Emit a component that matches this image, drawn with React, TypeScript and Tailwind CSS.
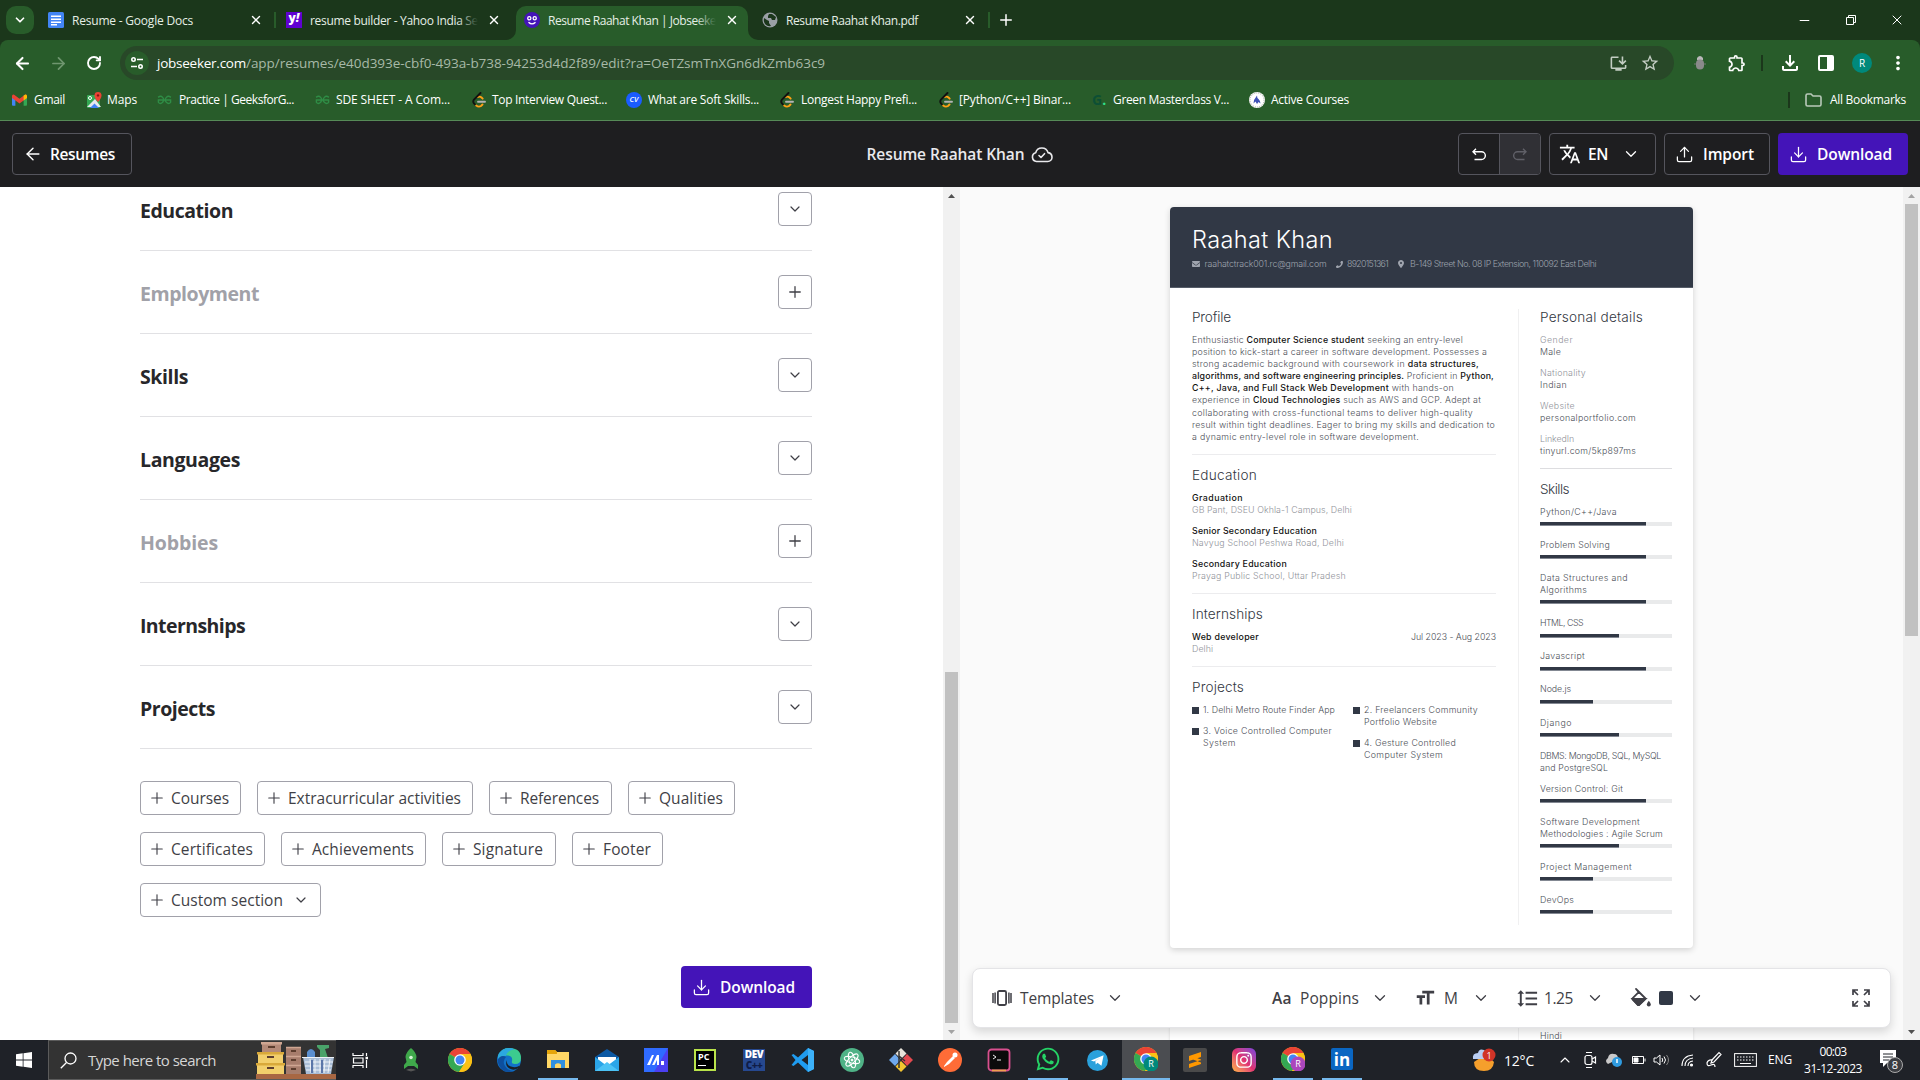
import { useLayoutEffect, useRef, type ReactNode } from "react";
import { ArrowLeft, ArrowRight, ChevronDown, ChevronUp, Download, Minus, Plus, RotateCw, Upload, X } from "lucide-react";
import { FaEnvelope, FaInstagram, FaPhone, FaWhatsapp } from "react-icons/fa";
import { FaLocationDot } from "react-icons/fa6";
import {
  MdFormatLineSpacing,
  MdFormatSize,
  MdMoreVert,
  MdOutlineExtension,
  MdOutlineFileDownload,
  MdOutlineInstallDesktop,
  MdStarBorder,
  MdTranslate,
} from "react-icons/md";

/** One line of text whose tracking is adjusted so it spans `w` pixels. */
function Fit({ w, className = "", children }: { w: number; className?: string; children: ReactNode }) {
  const ref = useRef<HTMLSpanElement>(null);
  useLayoutEffect(() => {
    const el = ref.current;
    if (!el) return;
    el.style.letterSpacing = "0px";
    const count = el.textContent?.length || 1;
    el.style.letterSpacing = `${(w - el.getBoundingClientRect().width) / count}px`;
  }, [w]);
  return (
    <span ref={ref} className={`inline-block shrink-0 whitespace-pre ${className}`}>
      {children}
    </span>
  );
}

/* ---------- Browser chrome ---------- */

const DocsIcon = () => (
  <svg viewBox="0 0 16 16" className="size-4">
    <rect width="16" height="16" rx="1.5" fill="#4285f4" />
    <path d="M3 4.2h10M3 7.2h10M3 10.2h10M3 12.8h6" stroke="#fff" strokeWidth="1.5" />
  </svg>
);

const YahooIcon = () => (
  <div className="flex size-4 items-center justify-center bg-[#5f01d1] text-[12px] leading-none font-extrabold text-white">
    <span className="-mt-1">
      y<span className="italic">!</span>
    </span>
  </div>
);

const JobIcon = () => (
  <svg viewBox="0 0 16 16" className="size-4">
    <circle cx="8" cy="8" r="8" fill="#4414b8" />
    <g fill="none" stroke="#fff">
      <circle cx="5.3" cy="6.3" r="1.6" strokeWidth="1.3" />
      <circle cx="10.7" cy="6.3" r="1.6" strokeWidth="1.3" />
      <path d="M4.5 10.2q3.5 3.4 7 0" strokeWidth="1.3" />
    </g>
  </svg>
);

const GlobeIcon = () => (
  <svg viewBox="0 0 16 16" className="size-4">
    <circle cx="8" cy="8" r="7.5" fill="#9aa0a6" />
    <path d="M2 6l3 2 2 1v2l2 3q-6 1-7.2-5zM7 2l3 0 4 3-1 3-3 0-1-2-3 0 0-2z" fill="#1b371b" />
  </svg>
);

function Tab({ icon, label, w, className, fade }: { icon: ReactNode; label: string; w: number; className: string; fade?: string }) {
  return (
    <div className={`flex h-[34px] items-center ${className}`}>
      {icon}
      <div className="relative mt-px ml-2 h-[18px] w-[168px] overflow-hidden text-[12px] leading-[18px] text-[#e6efe6]">
        <Fit w={w}>{label}</Fit>
        {fade && <div className={`absolute inset-y-0 right-0 w-5 bg-linear-to-r from-transparent ${fade}`} />}
      </div>
      <X className="ml-[9px] size-3.5 text-white" strokeWidth={2.4} />
    </div>
  );
}

const TabStrip = () => (
  <div className="flex h-10 items-end bg-[#1b371b] pl-1.5 text-white">
    <div className="mb-1.5 flex size-7 items-center justify-center rounded-[10px] bg-[#285c2a]">
      <ChevronDown className="size-3.5" strokeWidth={3} />
    </div>
    <Tab icon={<DocsIcon />} label="Resume - Google Docs" w={121} className="mb-[3px] ml-3.5 w-[226px]" />
    <div className="mb-3 h-4 w-0.5 bg-[#285c2a]" />
    <Tab icon={<YahooIcon />} label="resume builder - Yahoo India Se" w={168} className="mb-[3px] ml-2.5 w-[220px]" fade="to-[#1b371b]" />
    <div className="flex h-[34px] w-[252px]">
      <div className="w-2.5 self-end bg-[#285c2a]">
        <div className="h-2.5 rounded-br-[10px] bg-[#1b371b]" />
      </div>
      <div className="h-[34px] w-[232px] rounded-t-[10px] bg-[#285c2a] pr-2 pl-2">
        <Tab icon={<JobIcon />} label="Resume Raahat Khan | Jobseeke" w={168} className="-mt-[3px]" fade="to-[#285c2a]" />
      </div>
      <div className="w-2.5 self-end bg-[#285c2a]">
        <div className="h-2.5 rounded-bl-[10px] bg-[#1b371b]" />
      </div>
    </div>
    <Tab icon={<GlobeIcon />} label="Resume Raahat Khan.pdf" w={132} className="mb-[3px] ml-1 w-[226px]" />
    <div className="mb-3 h-4 w-0.5 bg-[#285c2a]" />
    <Plus className="mb-[11px] ml-[7px] size-[18px]" strokeWidth={2} />
    <div className="mb-3 ml-auto flex items-center pr-[15px]">
      <Minus className="size-[15px]" strokeWidth={1.6} />
      <svg viewBox="0 0 12 12" className="ml-[33px] size-3" fill="none" stroke="#fff">
        <path d="M1.5 3.5h7v7h-7zM3.5 3.5v-2h7v7h-2" />
      </svg>
      <X className="ml-[32px] size-4" strokeWidth={1.5} />
    </div>
  </div>
);

const Toolbar = () => (
  <div className="flex h-[46px] items-center rounded-t-lg bg-[#285c2a] pl-[13px] text-white">
    <ArrowLeft className="size-[19px]" strokeWidth={2.6} />
    <ArrowRight className="ml-[17px] size-[19px] text-[#6f966f]" strokeWidth={2.2} />
    <RotateCw className="ml-[18px] size-4" strokeWidth={2.8} />
    <div className="ml-[18px] flex h-[34px] w-[1554px] items-center rounded-full bg-[#284828] pl-[5px]">
      <div className="flex size-6 items-center justify-center rounded-full bg-[#285c2a]">
        <svg viewBox="0 0 14 14" className="size-3.5" fill="none" stroke="#fff" strokeWidth="1.6">
          <circle cx="3.5" cy="3.5" r="1.7" />
          <path d="M7 3.5h6M1 10.5h6" />
          <circle cx="10.5" cy="10.5" r="1.7" />
        </svg>
      </div>
      <Fit w={89} className="mt-px ml-2 text-[13.5px]">jobseeker.com</Fit>
      <Fit w={579} className="mt-px text-[13.5px] text-[#a7b9a7]">
        /app/resumes/e40d393e-cbf0-493a-b738-94253d4d2f89/edit?ra=OeTZsmTnXGn6dkZmb63c9
      </Fit>
      <MdOutlineInstallDesktop className="ml-auto size-[19px] text-[#c3cdc3]" />
      <MdStarBorder className="mr-[14px] ml-[12px] size-[20px] text-[#c3cdc3]" />
    </div>
    <svg viewBox="0 0 12 16" className="ml-5 h-4 w-3">
      <path d="M3 3q3-4 6 0v2H3z" fill="#b9b9b9" />
      <rect x="2" y="4.5" width="8" height="10" rx="4" fill="#8a8a8a" />
      <path d="M0 9h2M10 9h2" stroke="#777" />
    </svg>
    <MdOutlineExtension className="ml-[21px] size-5" />
    <div className="ml-[14px] h-4 w-0.5 bg-[#1b371b]" />
    <MdOutlineFileDownload className="ml-[15px] size-6" />
    <svg viewBox="0 0 16 16" className="ml-4 size-4">
      <rect x="1" y="1" width="14" height="14" rx="1" fill="none" stroke="#fff" strokeWidth="2" />
      <rect x="9" y="1" width="6" height="14" fill="#fff" />
    </svg>
    <div className="ml-[18px] flex size-5 items-center justify-center rounded-full bg-[#00897b] text-[10px]">R</div>
    <MdMoreVert className="ml-[15px] size-[22px]" />
  </div>
);

const GmailIcon = () => (
  <svg viewBox="0 0 16 12" className="h-3 w-[15px]">
    <path d="M0 1.5V11q0 1 1 1h2.6V5z" fill="#4285f4" />
    <path d="M16 1.5V11q0 1-1 1h-2.6V5z" fill="#34a853" />
    <path d="M0 1.5Q1-.6 3 .8L8 4.6l5-3.8q2-1.4 3 .7v2.3L8 9.6 0 3.8z" fill="#ea4335" />
    <path d="M12.4 1.2 13 .8q2-1.4 3 .7v2.3l-3.6 2.7z" fill="#fbbc04" />
  </svg>
);

const MapsIcon = () => (
  <svg viewBox="0 0 16 16" className="size-4">
    <rect x="1" y="3" width="13" height="13" rx="1" fill="#34a853" />
    <path d="M1 15 9 7l6 8z" fill="#e8eaed" />
    <path d="M4 16l4.500-4.500L13 16z" fill="#4285f4" />
    <path d="M12 0q3.500 0 3.500 3.400Q15.500 6 12 10 8.500 6 8.500 3.400 8.500 0 12 0z" fill="#ea4335" />
    <circle cx="12" cy="3.400" r="1.200" fill="#811" />
    <circle cx="4" cy="6" r="1.500" fill="none" stroke="#fff" />
  </svg>
);

const GfgIcon = () => (
  <svg viewBox="0 0 16 10" className="h-2.5 w-[15px]" fill="none" stroke="#2f8d46" strokeWidth="1.500">
    <path d="M1.200 2.200Q4 0 6 2.200T6 7.500Q3.500 10 1.500 7.500V5h13v2.500q-2 2.500-4.500 0t0-5.300q2-2.200 4.800 0" />
  </svg>
);

const LeetIcon = () => (
  <svg viewBox="0 0 14 16" className="h-4 w-3.5" fill="none" strokeLinecap="round" strokeWidth="1.900">
    <path d="M5.500 5q2.500-1 4 .500l1.200 1.200" stroke="#ffa116" />
    <path d="M8.500 1 2 7.500Q.5 9.500 2 11.500l1.200 1.200" stroke="#111" />
    <path d="M4.200 13.500q2.500 2 4.800.500l1.500-1.500" stroke="#ffa116" />
    <path d="M6 9.700h7" stroke="#b3b3b3" />
  </svg>
);

const CvIcon = () => (
  <div className="flex size-4 items-center justify-center rounded-full bg-[#1a5cff] text-[7.500px] font-semibold text-white italic">CV</div>
);

const GreenIcon = () => (
  <div className="flex h-4 w-[15px] items-center text-[14px] leading-none font-bold text-[#0c4f35]">
    G<span className="text-[#2fe08a]">.</span>
  </div>
);

const ActiveIcon = () => (
  <svg viewBox="0 0 16 16" className="size-4">
    <circle cx="8" cy="8" r="8" fill="#fff" />
    <circle cx="8" cy="8" r="7" fill="none" stroke="#aaa" strokeDasharray="1 1" />
    <path d="M4.500 11.500q0-4 3.500-8Q8 6.500 9.500 7q2 2 2 4.500l-2-1.500L8 12 6.500 9.500z" fill="#3f51b5" />
  </svg>
);

const bookmarks: { icon: ReactNode; label: string; w: number; cell: string; gap: string }[] = [
  { icon: <GmailIcon />, label: "Gmail", w: 31, cell: "w-[74px]", gap: "ml-[7px]" },
  { icon: <MapsIcon />, label: "Maps", w: 30, cell: "w-[71px]", gap: "ml-[5px]" },
  { icon: <GfgIcon />, label: "Practice | GeeksforG...", w: 115, cell: "w-[158px]", gap: "ml-[7px]" },
  { icon: <GfgIcon />, label: "SDE SHEET - A Com...", w: 114, cell: "w-[157px]", gap: "ml-[6px]" },
  { icon: <LeetIcon />, label: "Top Interview Quest...", w: 115, cell: "w-[154px]", gap: "ml-[6px]" },
  { icon: <CvIcon />, label: "What are Soft Skills...", w: 111, cell: "w-[154px]", gap: "ml-[6px]" },
  { icon: <LeetIcon />, label: "Longest Happy Prefi...", w: 116, cell: "w-[159px]", gap: "ml-[7px]" },
  { icon: <LeetIcon />, label: "[Python/C++] Binar...", w: 112, cell: "w-[153px]", gap: "ml-[6px]" },
  { icon: <GreenIcon />, label: "Green Masterclass V...", w: 116, cell: "w-[157px]", gap: "ml-[6px]" },
  { icon: <ActiveIcon />, label: "Active Courses", w: 78, cell: "w-[110px]", gap: "ml-[6px]" },
];

const BookmarkBar = () => (
  <div className="flex h-[35px] items-center border-b border-[#568a57] bg-[#285c2a] pb-1.5 pl-3 text-[12px] text-white">
    {bookmarks.map((b) => (
      <div key={b.label} className={`flex shrink-0 items-center ${b.cell}`}>
        {b.icon}
        <Fit w={b.w} className={b.gap}>{b.label}</Fit>
      </div>
    ))}
    <div className="ml-auto h-4 w-0.5 bg-[#1b371b]" />
    <svg viewBox="0 0 17 14" className="ml-[15px] h-3.5 w-[17px]" fill="none" stroke="#b9c9b9" strokeWidth="1.600">
      <path d="M1 2.500Q1 1 2.500 1H6l2 2h6.500Q16 3 16 4.500v7q0 1.500-1.500 1.500h-12Q1 13 1 11.500z" />
    </svg>
    <Fit w={76} className="mr-[14px] ml-2">All Bookmarks</Fit>
  </div>
);

/* ---------- Application header ---------- */

const outlined = "flex h-[42px] items-center rounded-[4px] border border-[#55555d]";

const AppHeader = () => (
  <div className="grid h-[66px] grid-cols-3 items-center bg-[#1e1e20] px-3 text-[15.500px] font-semibold text-white">
    <div className={`${outlined} w-[120px] pl-[10px]`}>
      <ArrowLeft className="size-[20px]" strokeWidth={1.700} />
      <Fit w={65} className="ml-[7px] pt-0.5">Resumes</Fit>
    </div>
    <div className="flex items-center justify-center">
      <Fit w={158} className="pt-0.5 text-[15.500px] text-[#e9e9ec]">Resume Raahat Khan</Fit>
      <svg viewBox="0 0 22 18" className="mr-px ml-[6px] h-[18px] w-[22px]" fill="none" stroke="#e9e9ec" strokeWidth="1.600" strokeLinecap="round" strokeLinejoin="round">
        <path d="M5.500 16.500a4.500 4.500 0 0 1-.8-8.800A6.400 6.400 0 0 1 17 7.600q4 .6 4 4.700a4.200 4.200 0 0 1-4.200 4.200z" />
        <path d="M8 10.500l2 2 3.500-3.800" />
      </svg>
    </div>
    <div className="flex justify-end gap-2">
      <div className={`${outlined} w-[83px] overflow-hidden`}>
        <div className="flex h-full w-[41px] items-center justify-center border-r border-[#55555d]">
          <svg viewBox="0 0 14 13" className="h-[13px] w-3.5" fill="none" stroke="#fff" strokeWidth="1.400">
            <path d="M4 .8 1 3.800l3 3M1 3.800h8.500a3.700 3.700 0 0 1 0 7.700H2.500" />
          </svg>
        </div>
        <div className="flex h-full flex-1 items-center justify-center bg-[#303035]">
          <svg viewBox="0 0 14 13" className="h-[13px] w-3.5" fill="none" stroke="#606068" strokeWidth="1.400">
            <path d="m10 .8 3 3-3 3M13 3.800H4.500a3.700 3.700 0 0 0 0 7.700h7" />
          </svg>
        </div>
      </div>
      <div className={`${outlined} w-[107px] pl-[9px]`}>
        <MdTranslate className="size-[22px]" />
        <Fit w={20} className="ml-[7px] pt-0.5">EN</Fit>
        <ChevronDown className="ml-[14px] size-[18px]" strokeWidth={1.700} />
      </div>
      <div className={`${outlined} w-[106px] pl-[10px]`}>
        <Upload className="size-[19px]" strokeWidth={1.600} />
        <Fit w={51} className="ml-[9px] pt-0.5">Import</Fit>
      </div>
      <div className="flex h-[42px] w-[130px] items-center rounded-[4px] bg-[#4414b8] pl-[11px]">
        <Download className="size-[19px]" strokeWidth={1.600} />
        <Fit w={75} className="ml-[9px] pt-0.5">Download</Fit>
      </div>
    </div>
  </div>
);

/* ---------- Editor column ---------- */

const sections = [
  { name: "Education", w: 93, empty: false },
  { name: "Employment", w: 119, empty: true },
  { name: "Skills", w: 48, empty: false },
  { name: "Languages", w: 100, empty: false },
  { name: "Hobbies", w: 78, empty: true },
  { name: "Internships", w: 105, empty: false },
  { name: "Projects", w: 75, empty: false },
];

const chipRows = [
  [
    { name: "Courses", w: 58, box: "w-[101px]" },
    { name: "Extracurricular activities", w: 173, box: "w-[216px]" },
    { name: "References", w: 79, box: "w-[123px]" },
    { name: "Qualities", w: 64, box: "w-[107px]" },
  ],
  [
    { name: "Certificates", w: 82, box: "w-[125px]" },
    { name: "Achievements", w: 102, box: "w-[145px]" },
    { name: "Signature", w: 70, box: "w-[114px]" },
    { name: "Footer", w: 48, box: "w-[91px]" },
  ],
  [{ name: "Custom section", w: 112, box: "w-[181px]" }],
];

const Editor = () => (
  <div className="w-[943px] overflow-hidden bg-white pt-[5px] pl-[140px]">
    <div className="w-[672px]">
      {sections.map((s) => (
        <div key={s.name} className="mb-6 flex h-[59px] items-start justify-between border-b border-[#e1e1e4]">
          <Fit w={s.w} className={s.empty ? "pt-[5px] text-[19.500px] leading-7 font-bold text-[#a1a1a8]" : "pt-[5px] text-[19.500px] leading-7 font-bold text-[#27272a]"}>
            {s.name}
          </Fit>
          <div className="flex size-[34px] items-center justify-center rounded-[4px] border border-[#a1a1aa] text-[#3f3f46]">
            {s.empty ? <Plus className="size-[18px]" strokeWidth={1.700} /> : <ChevronDown className="size-4" strokeWidth={1.800} />}
          </div>
        </div>
      ))}
      <div className="mt-8 flex flex-col gap-[17px]">
        {chipRows.map((row, i) => (
          <div key={i} className="flex gap-4">
            {row.map((c) => (
              <div key={c.name} className={`flex h-[34px] items-center rounded-[4px] border border-[#a1a1aa] pl-[7px] text-[15.500px] text-[#3f3f46] ${c.box}`}>
                <Plus className="size-[18px]" strokeWidth={1.500} />
                <Fit w={c.w} className="ml-[5px] pt-0.5 font-medium">{c.name}</Fit>
                {c.name === "Custom section" && <ChevronDown className="ml-[10px] size-4" strokeWidth={1.800} />}
              </div>
            ))}
          </div>
        ))}
      </div>
      <div className="mt-[49px] ml-auto flex h-[42px] w-[131px] items-center rounded-[4px] bg-[#4414b8] pl-[11px] text-[15.500px] font-semibold text-white">
        <Download className="size-[19px]" strokeWidth={1.600} />
        <Fit w={75} className="ml-[9px] pt-0.5">Download</Fit>
      </div>
    </div>
  </div>
);

const Arrow = ({ up, dark }: { up?: boolean; dark?: boolean }) => (
  <svg viewBox="0 0 17 17" className="size-[17px] shrink-0" fill={dark ? "#505050" : "#a3a3a3"}>
    <path d={up ? "M5 11h7L8.500 7z" : "M5 7h7l-3.500 4z"} />
  </svg>
);

/* ---------- Resume preview ---------- */

const Heading = ({ w, children }: { w: number; children: ReactNode }) => (
  <h2 className="h-[25px] text-[13.600px] leading-[17px] font-light text-[#33373f]">
    <Fit w={w}>{children}</Fit>
  </h2>
);

const B = ({ children }: { children: ReactNode }) => <b className="font-medium text-[#111]">{children}</b>;

const profile: { w: number; text: ReactNode }[] = [
  { w: 271, text: <>Enthusiastic <B>Computer Science student</B> seeking an entry-level</> },
  { w: 295, text: "position to kick-start a career in software development. Possesses a" },
  { w: 287, text: <>strong academic background with coursework in <B>data structures,</B></> },
  { w: 302, text: <><B>algorithms, and software engineering principles.</B> Proficient in <B>Python,</B></> },
  { w: 262, text: <><B>C++, Java, and Full Stack Web Development</B> with hands-on</> },
  { w: 289, text: <>experience in <B>Cloud Technologies</B> such as AWS and GCP. Adept at</> },
  { w: 281, text: "collaborating with cross-functional teams to deliver high-quality" },
  { w: 303, text: "result within tight deadlines. Eager to bring my skills and dedication to" },
  { w: 227, text: "a dynamic entry-level role in software development." },
];

const education = [
  { t: "Graduation", tw: 51, s: "GB Pant, DSEU Okhla-1 Campus, Delhi", sw: 160 },
  { t: "Senior Secondary Education", tw: 125, s: "Navyug School Peshwa Road, Delhi", sw: 152 },
  { t: "Secondary Education", tw: 95, s: "Prayag Public School, Uttar Pradesh", sw: 154 },
];

const details = [
  { t: "Gender", tw: 33, s: "Male", sw: 21 },
  { t: "Nationality", tw: 46, s: "Indian", sw: 27 },
  { t: "Website", tw: 35, s: "personalportfolio.com", sw: 96 },
  { t: "LinkedIn", tw: 34, s: "tinyurl.com/5kp897ms", sw: 96 },
];

const projects = [
  [
    [["1. Delhi Metro Route Finder App", 132]],
    [["3. Voice Controlled Computer", 129], ["System", 33]],
  ],
  [
    [["2. Freelancers Community", 114], ["Portfolio Website", 73]],
    [["4. Gesture Controlled", 92], ["Computer System", 79]],
  ],
] as [string, number][][][];

const skills: { lines: [string, number][]; bar: string }[] = [
  { lines: [["Python/C++/Java", 77]], bar: "w-4/5" },
  { lines: [["Problem Solving", 70]], bar: "w-4/5" },
  { lines: [["Data Structures and", 88], ["Algorithms", 47]], bar: "w-4/5" },
  { lines: [["HTML, CSS", 43]], bar: "w-3/5" },
  { lines: [["Javascript", 45]], bar: "w-4/5" },
  { lines: [["Node.js", 31]], bar: "w-2/5" },
  { lines: [["Django", 32]], bar: "w-3/5" },
  { lines: [["DBMS: MongoDB, SQL, MySQL", 121], ["and PostgreSQL", 68]], bar: "" },
  { lines: [["Version Control: Git", 83]], bar: "w-4/5" },
  { lines: [["Software Development", 100], ["Methodologies : Agile Scrum", 123]], bar: "w-3/5" },
  { lines: [["Project Management", 92]], bar: "w-2/5" },
  { lines: [["DevOps", 34]], bar: "w-2/5" },
];

const Line = ({ w, className = "", children }: { w: number; className?: string; children: ReactNode }) => (
  <div className={`h-[12.100px] leading-[12.100px] ${className}`}>
    <Fit w={w}>{children}</Fit>
  </div>
);

const Resume = () => (
  <div className="h-[741px] w-[523px] shrink-0 overflow-hidden rounded-[4px] bg-white font-[Inter,sans-serif] text-[8.800px] font-light text-[#4a4e56] shadow-[0_2px_6px_rgba(0,0,0,0.16)]">
    <div className="h-[81px] border-b border-[#565d69] bg-[#313845] px-[22px] pt-[18px]">
      <h1 className="text-[23.500px] leading-[30px] text-white">
        <Fit w={141}>Raahat Khan</Fit>
      </h1>
      <div className="mt-[3px] flex items-center leading-3 text-[#9fa4ae]">
        <FaEnvelope className="size-2" />
        <Fit w={122} className="ml-[4.500px]">raahatctrack001.rc@gmail.com</Fit>
        <FaPhone className="ml-[9px] size-[7px]" />
        <Fit w={41} className="ml-[4.500px]">8920151361</Fit>
        <FaLocationDot className="ml-[9px] size-2" />
        <Fit w={186} className="ml-[5px]">B-149 Street No. 08 IP Extension, 110092 East Delhi</Fit>
      </div>
    </div>
    <div className="flex pt-[21px] pl-[22px]">
      <div className="h-[616px] w-[327px] border-r border-[#f0f0f1] pr-[22px]">
        <Heading w={39}>Profile</Heading>
        <div className="h-[121px] border-b border-[#ececee]">
          {profile.map((l, i) => (
            <Line key={i} w={l.w}>{l.text}</Line>
          ))}
        </div>
        <div className="h-[139px] border-b border-[#ececee] pt-[12px]">
          <Heading w={65}>Education</Heading>
          {education.map((e) => (
            <div key={e.t} className="mb-[8.800px]">
              <Line w={e.tw}><B>{e.t}</B></Line>
              <Line w={e.sw} className="text-[#8f9299]">{e.s}</Line>
            </div>
          ))}
        </div>
        <div className="h-[73px] border-b border-[#ececee] pt-[12px]">
          <Heading w={71}>Internships</Heading>
          <div className="flex justify-between">
            <Line w={67}><B>Web developer</B></Line>
            <Line w={85}>Jul 2023 - Aug 2023</Line>
          </div>
          <Line w={21} className="text-[#8f9299]">Delhi</Line>
        </div>
        <div className="pt-[12px]">
          <Heading w={52}>Projects</Heading>
          <div className="grid grid-cols-[161px_1fr]">
            {projects.map((col, i) => (
              <div key={i}>
                {col.map((item, j) => (
                  <div key={j} className="mb-[8.800px] flex">
                    <div className="mt-[3px] mr-1 size-[7px] bg-[#313845]" />
                    <div>
                      {item.map(([t, w]) => (
                        <Line key={t} w={w}>{t}</Line>
                      ))}
                    </div>
                  </div>
                ))}
              </div>
            ))}
          </div>
        </div>
      </div>
      <div className="w-[153px] pl-[21px]">
        <Heading w={103}>Personal details</Heading>
        <div className="h-[135px] border-b border-[#dddde0]">
          {details.map((d) => (
            <div key={d.t} className="mb-[8.800px]">
              <Line w={d.tw} className="text-[#8f9299]">{d.t}</Line>
              <Line w={d.sw}>{d.s}</Line>
            </div>
          ))}
        </div>
        <div className="pt-[12px]">
          <Heading w={29}>Skills</Heading>
          {skills.map((s) => (
            <div key={s.lines[0][0]} className="mb-[8.900px]">
              {s.lines.map(([t, w]) => (
                <Line key={t} w={w}>{t}</Line>
              ))}
              {s.bar && (
                <div className="pt-[4.100px] pb-1">
                  <div className="h-1 bg-[#e9eaeb]">
                    <div className={`h-full border-b border-[#838892] bg-[#313845] ${s.bar}`} />
                  </div>
                </div>
              )}
            </div>
          ))}
        </div>
      </div>
    </div>
  </div>
);

const Chev = ({ className }: { className: string }) => <ChevronDown className={`size-[18px] ${className}`} strokeWidth={1.700} />;

const DesignBar = () => (
  <div className="absolute top-[781px] left-[12px] flex h-[60px] w-[919px] items-center rounded-lg border border-[#e4e4e7] bg-white pl-[19px] text-[15.500px] font-medium text-[#3f3f46] shadow-[0_4px_10px_rgba(0,0,0,0.14)]">
    <svg viewBox="0 0 20 16" className="h-4 w-5" fill="none" stroke="currentColor" strokeWidth="1.800">
      <rect x="5.900" y="1" width="8.200" height="14" rx="1.500" />
      <path d="M1 3v10M3.100 2.500v11M16.900 2.500v11M19 3v10" strokeWidth="1.500" />
    </svg>
    <Fit w={74} className="ml-2 pt-0.5">Templates</Fit>
    <Chev className="ml-[12px]" />
    <Fit w={20} className="ml-[148px] pt-0.5 font-semibold">Aa</Fit>
    <Fit w={59} className="ml-[8px] pt-0.5">Poppins</Fit>
    <Chev className="ml-[12px]" />
    <MdFormatSize className="ml-[25px] size-[22px]" />
    <Fit w={15} className="ml-[8px] pt-0.5">M</Fit>
    <Chev className="ml-[13px]" />
    <MdFormatLineSpacing className="ml-[26px] size-[23px]" />
    <Fit w={29} className="ml-[5px] pt-0.5">1.25</Fit>
    <Chev className="ml-[13px]" />
    <svg viewBox="0 0 22 22" className="ml-[26px] size-[22px]" fill="none" stroke="currentColor" strokeWidth="1.800">
      <path d="M6 2l9.500 9.500-6.200 6.200q-.8.600-1.600 0l-5-5q-.8-.8 0-1.600l6-6z" strokeLinejoin="round" />
      <path d="M2.500 12h13l-6.200 5.900q-.8.600-1.600 0z" fill="currentColor" />
      <path d="M18.800 13.800q2 2.500 2 3.700a2 2 0 0 1-4 0q0-1.200 2-3.700z" fill="currentColor" stroke="none" />
    </svg>
    <div className="ml-[7px] size-3.5 rounded-[2px] bg-[#313845]" />
    <Chev className="ml-[13px]" />
    <svg viewBox="0 0 18 18" className="mr-5 ml-auto size-[18px]" fill="none" stroke="currentColor" strokeWidth="1.700">
      <path d="M1 6V1h5M1 1l5 5M12 1h5v5M17 1l-5 5M1 12v5h5M1 17l5-5M17 12v5h-5M17 17l-5-5" />
    </svg>
  </div>
);

const Preview = () => (
  <div className="relative flex h-[853px] w-[943px] flex-col overflow-hidden bg-[#fafafa] pt-5 pl-[210px]">
    <Resume />
    <div className="mt-10 h-[60px] w-[523px] shrink-0 rounded-t-[4px] bg-white pl-[348px] shadow-[0_0_3px_rgba(0,0,0,0.14)]">
      <div className="h-full border-l border-[#f0f0f1] pt-[41.500px] pl-[21px] font-[Inter,sans-serif] text-[8.800px] leading-3 font-light text-[#4a4e56]">
        <Fit w={22}>Hindi</Fit>
      </div>
    </div>
    <DesignBar />
  </div>
);

/* ---------- Windows taskbar ---------- */

const Chrome = ({ badge }: { badge?: string }) => (
  <svg viewBox="0 0 24 24" className="size-6">
    <circle cx="12" cy="12" r="12" fill="#fbc116" />
    <path d="M12 12 1.600 6A12 12 0 0 1 22.400 6z" fill="#ea4335" />
    <path d="M12 12 1.600 6A12 12 0 0 0 11 24l5.800-9.300z" fill="#34a853" />
    <path d="M12 6h10.400A12 12 0 0 1 11 24l6.200-9z" fill="#fbc116" />
    <circle cx="12" cy="12" r="5.800" fill="#fff" />
    <circle cx="12" cy="12" r="4.500" fill="#4285f4" />
    {badge && (
      <>
        <circle cx="17" cy="17" r="7.500" fill={badge} />
        <text x="17" y="20.200" fontSize="9" textAnchor="middle" fill="#fff">R</text>
      </>
    )}
  </svg>
);

const apps: { icon: ReactNode; state?: "open" | "active" }[] = [
  {
    icon: (
      <svg viewBox="0 0 24 24" className="size-6">
        <path d="M12 0q5 4 5.500 9l-1 5 2.500 3v4l-4-3H9l-4 3v-4l2.500-3-1-5Q7 4 12 0z" fill="#3fa84b" />
        <circle cx="12" cy="9.500" r="1.800" fill="#d5f0d5" />
        <path d="M7 22q5-2.500 10 0l-5 1.500z" fill="#555" />
      </svg>
    ),
  },
  { icon: <Chrome /> },
  {
    icon: (
      <svg viewBox="0 0 24 24" className="size-6">
        <circle cx="12" cy="12" r="12" fill="#1272c8" />
        <path d="M1 8Q4 0 12 0q12 0 12 10 0 6-6 6-4 0-3-3 1-5-4-5.500Q5 7 1 11z" fill="#3ccb8f" />
        <path d="M1 8Q4 0 12 0q4 0 6 1.500Q10 2 9 8 4 7 1 11z" fill="#2ba8e0" />
        <path d="M9 9q-4 4-1 9 3 5 9 5Q12 25 7 23 1 19 .500 12 4 6 9 9z" fill="#0d4f9e" />
        <path d="M10 12q-1 6 6 7 4 .500 6-1 .500 1-.500 2-5 3-9 .500-5-3-2.500-8.500z" fill="#1b1f25" />
      </svg>
    ),
  },
  {
    icon: (
      <svg viewBox="0 0 24 24" className="size-6">
        <path d="M1 3h8l2 2h12v16H1z" fill="#ffd766" />
        <path d="M1 3h8l2 2v2H1z" fill="#e5a50a" />
        <path d="M5 21v-8h14v8h-4v-3.500q-3-2.500-6 0V21z" fill="#2f8fe0" />
      </svg>
    ),
    state: "open",
  },
  {
    icon: (
      <svg viewBox="0 0 24 24" className="size-6">
        <path d="M0 9 12 1l12 8v4H0z" fill="#0c59a4" />
        <path d="M3 9h18v8H3z" fill="#fff" />
        <path d="M0 9l12 9L24 9v14H0z" fill="#2ba5e8" />
        <path d="M0 23 12 14l12 9z" fill="#4cc2f5" />
      </svg>
    ),
  },
  {
    icon: (
      <svg viewBox="0 0 24 24" className="size-6">
        <rect width="24" height="24" fill="#2f6bff" />
        <path d="M24 0v24H10z" fill="#4b3ff0" />
        <path d="M3 17 8 7h2L6 17zM8 17l5-10h2v10h-2v-5l-2.500 5zM17 13h3v4h-3z" fill="#fff" />
      </svg>
    ),
  },
  {
    icon: (
      <div className="flex size-[22px] flex-col items-start bg-black pt-[3px] pl-1 text-[9px] leading-[10px] font-bold text-white outline-2 -outline-offset-2 outline-[#b9e34a]">
        PC
        <div className="mt-[3px] h-px w-2 bg-white" />
      </div>
    ),
  },
  {
    icon: (
      <div className="flex h-[22px] w-[22px] flex-col items-center bg-[#26488f] text-[10px] leading-[11px] font-extrabold text-white">
        <span className="tracking-tighter">DEV</span>
        <span className="text-[10px] tracking-tighter text-[#0f1c46]">C++</span>
      </div>
    ),
  },
  {
    icon: (
      <svg viewBox="0 0 24 24" className="size-6">
        <path d="M17 0 7 9.500 2.500 6 .500 7l4 5-4 5 2 1L7 14.500 17 24l6-3V3zm0 7v10l-6.500-5z" fill="#1f9cf0" />
        <path d="M17 0v24l6-3V3z" fill="#3cb2fa" />
      </svg>
    ),
  },
  {
    icon: (
      <svg viewBox="0 0 24 24" className="size-6" fill="none" stroke="#fff">
        <circle cx="12" cy="12" r="12" fill="#4fb286" stroke="none" />
        <ellipse cx="12" cy="12" rx="8" ry="3" transform="rotate(15 12 12)" />
        <ellipse cx="12" cy="12" rx="8" ry="3" transform="rotate(75 12 12)" />
        <ellipse cx="12" cy="12" rx="8" ry="3" transform="rotate(135 12 12)" />
        <circle cx="12" cy="12" r="1" fill="#fff" />
      </svg>
    ),
  },
  {
    icon: (
      <svg viewBox="0 0 24 24" className="size-6">
        <path d="M12 0l5.500 5.500L12 11 6.500 5.500z" fill="#e8e3da" />
        <path d="M6 6l5.500 6L6 18l-6-6z" fill="#6fa8ec" />
        <path d="M18 6l6 6-6 6-5.500-6z" fill="#e3494f" />
        <path d="M12 13l5.500 5.500L12 24l-5.500-5.500z" fill="#f4c430" />
        <path d="M10 3v17M10 8l6 5" stroke="#333" strokeWidth="1.500" />
      </svg>
    ),
  },
  {
    icon: (
      <svg viewBox="0 0 24 24" className="size-6">
        <circle cx="12" cy="12" r="12" fill="#ff6c37" />
        <path d="M6 18l3-4 6-6 2 2-6 6-5 3z" fill="#fff" />
        <circle cx="17" cy="7" r="2.500" fill="#fff" />
      </svg>
    ),
  },
  {
    icon: (
      <svg viewBox="0 0 24 24" className="size-6">
        <rect x="1.500" y="1.500" width="21" height="21" rx="3" fill="#0b0b0b" stroke="#d9508f" strokeWidth="1.800" />
        <path d="M5 22.500h14" stroke="#f0a050" strokeWidth="1.800" />
        <path d="M6 7l3 2-3 2M10 12h4" stroke="#eee" fill="none" />
      </svg>
    ),
  },
  { icon: <FaWhatsapp className="size-[26px] text-[#25d366]" />, state: "open" },
  {
    icon: (
      <svg viewBox="0 0 24 24" className="size-[21px]">
        <circle cx="12" cy="12" r="12" fill="#2aa1dc" />
        <path d="M4.500 12 19 6l-2.500 12-4.500-3.500-2 2-.500-4L16 8.500 8 13.200z" fill="#fff" />
      </svg>
    ),
  },
  { icon: <Chrome badge="#00897b" />, state: "active" },
  {
    icon: (
      <svg viewBox="0 0 24 24" className="size-6">
        <rect width="24" height="24" rx="2" fill="#4a4a4a" />
        <path d="M18 4 6 8v5l12-4zM6 10l12 4.500v-3L8 8zM18 12v4L6 20v-4z" fill="#ff9800" />
      </svg>
    ),
  },
  {
    icon: (
      <div className="flex size-6 items-center justify-center rounded-md bg-linear-to-bl from-[#7a3ae0] via-[#e02f72] to-[#ffb43c]">
        <FaInstagram className="size-[18px] text-white" />
      </div>
    ),
  },
  { icon: <Chrome badge="#ab47bc" />, state: "open" },
  {
    icon: <div className="flex size-[22px] items-center justify-center rounded-[2px] bg-[#0a66c2] text-[17px] leading-none font-bold text-white">in</div>,
    state: "open",
  },
];

const Boxes = () => (
  <svg viewBox="0 0 80 38" className="h-[38px] w-20">
    <rect y="33" width="80" height="5" fill="#a86743" />
    <rect x="6" y="2" width="19" height="9" fill="#b48a78" />
    <rect x="5" y="1" width="21" height="2.500" fill="#cfa692" />
    <rect x="2" y="13" width="25" height="9" fill="#f2cf6c" />
    <rect x="1" y="11" width="27" height="2.500" fill="#d9a93a" />
    <rect x="1" y="24" width="27" height="9" fill="#f2cf6c" />
    <rect y="22" width="29" height="2.500" fill="#d9a93a" />
    <rect x="30" y="6" width="15" height="27" fill="#a77d6c" />
    <path d="M30 6.500h15M30 15.500h15M30 24.500h15" stroke="#cfa692" strokeWidth="1.500" />
    <path d="M12 6h7M11 16h7M11 27h7M35 10h5M35 19h5M35 28h5" stroke="#5c3d2e" strokeWidth="1.800" />
    <path d="M51 17v-6q4-6 8 0v6z" fill="#5b8fd0" />
    <path d="M64 17V9l-3-3V4h12v3l-4 1 3 9z" fill="#4aa36a" />
    <path d="M47 16h31l-3 17H50z" fill="#a9bdd6" />
    <path d="M46 16.500h32M49 21h28M49 25h27M50 29h25M54 18l1 14M59 18v14M64 18v14M69 18l-1 14M74 18l-2 14" stroke="#eef2f7" />
    <path d="M56 19v13M66 19v13" stroke="#5b76a8" strokeWidth="2" />
  </svg>
);

const Taskbar = () => (
  <div className="flex h-10 items-center bg-[#1f2228] text-white">
    <svg viewBox="0 0 16 16" className="mx-4 size-4 shrink-0" fill="#fff">
      <path d="M0 2.200 6.700 1.300v6.300H0zM7.500 1.200 16 0v7.600H7.500zM0 8.400h6.700v6.300L0 13.800zM7.500 8.400H16V16l-8.500-1.200z" />
    </svg>
    <div className="flex h-10 w-72 shrink-0 items-center border border-r-0 border-[#5b5b5b] bg-[#333] pl-[11px]">
      <svg viewBox="0 0 17 17" className="size-[17px]" fill="none" stroke="#fff" strokeWidth="1.300">
        <circle cx="10.500" cy="6.500" r="5.500" />
        <path d="M6.500 10.500.800 16.200" />
      </svg>
      <Fit w={128} className="mt-px ml-[11px] text-[15px] text-[#d6d6d6]">Type here to search</Fit>
      <div className="ml-auto"><Boxes /></div>
    </div>
    <svg viewBox="0 0 17 17" className="mx-4 size-[17px] shrink-0" fill="none" stroke="#fff" strokeWidth="1.200">
      <path d="M1 1v2.500h10V1M1 16v-2.500h10V16M1.500 6h9.500v5H1.500zM14.500 1v3M14.500 8v8" />
      <path d="M13.500 6h2.500" strokeWidth="2.500" />
    </svg>
    <div className="ml-0.5 flex h-10">
      {apps.map((a, i) => (
        <div
          key={i}
          className={
            a.state === "active"
              ? "mr-px flex h-10 w-12 items-center justify-center border-b-2 border-[#76b9ed] bg-[#4b4d51]"
              : "mr-px flex h-10 w-12 items-center justify-center px-1"
          }
        >
          <div className={a.state === "open" ? "flex h-10 w-10 items-center justify-center border-b-2 border-[#76b9ed]" : "flex h-10 items-center"}>
            {a.icon}
          </div>
        </div>
      ))}
    </div>
    <div className="ml-auto flex items-center pr-[14px]">
      <svg viewBox="0 0 24 24" className="size-6">
        <path d="M2 14q0 9 10 9 9 0 10-9l-4-4H8z" fill="#f59f2c" />
        <path d="M1 11q-1-6 5-6 1-5 6-3 4 2 2 9z" fill="#b8cdf3" />
        <circle cx="17" cy="7" r="6.500" fill="#d13428" />
        <text x="17" y="10.500" fontSize="9" textAnchor="middle" fill="#fff">1</text>
      </svg>
      <Fit w={30} className="ml-2 text-[14px]">12°C</Fit>
      <ChevronUp className="ml-[23px] size-4" strokeWidth={1.600} />
      <svg viewBox="0 0 16 18" className="ml-[9px] h-[18px] w-4" fill="none" stroke="#fff" strokeWidth="1.200">
        <rect x="3" y="4.500" width="7" height="9" rx="2" />
        <path d="m10 8 3.500-2v6L10 10M4 1.500h6M4 16.500h6" />
      </svg>
      <svg viewBox="0 0 18 16" className="ml-[7px] h-4 w-[18px]">
        <path d="M3 12Q-1 9 3 6q1-5 6-4 4 0 4 5z" fill="#c9c9c9" />
        <circle cx="12" cy="10" r="5" fill="#2f9be0" />
        <path d="M12 7v4" stroke="#fff" strokeWidth="1.500" />
      </svg>
      <svg viewBox="0 0 16 12" className="ml-[8px] h-3 w-4" fill="none" stroke="#fff">
        <path d="M1.500 2.500h11v7h-11zM14 4.500v3" />
        <path d="M3 4h4v4H3z" fill="#fff" />
      </svg>
      <svg viewBox="0 0 18 14" className="ml-[6px] h-3.5 w-[18px]" fill="none" stroke="#fff">
        <path d="M1 5h2.500L7 2v10L3.500 9H1zM9 5q1.500 2 0 4M11 3.500q3 3.500 0 7" />
        <path d="M13.500 2q4 5 0 10" stroke="#888" />
      </svg>
      <svg viewBox="0 0 16 16" className="ml-[8px] size-4" fill="none" stroke="#fff" strokeWidth="1.100">
        <path d="M3 14Q3 4 14 3M6 14q0-7 8-8M9 14q0-4.500 5-5" />
        <circle cx="12.500" cy="13" r="1" fill="#fff" />
      </svg>
      <svg viewBox="0 0 18 18" className="ml-[10px] size-[18px]" fill="none" stroke="#fff" strokeWidth="1.200">
        <path d="M7 9 14 1.500l2 2L9 11l-3 1zM8 9q-5-1-6 3 0 4 4 2t4 2" />
      </svg>
      <svg viewBox="0 0 23 14" className="ml-[11px] h-3.5 w-[23px]" fill="none" stroke="#fff">
        <rect x=".600" y=".600" width="21.800" height="12.800" />
        <path d="M3 4h17M3 7h17" strokeDasharray="1.500 1.500" />
        <path d="M6 10.500h11" />
      </svg>
      <Fit w={24} className="ml-[11px] text-[12px]">ENG</Fit>
      <div className="ml-[11px] flex w-[60px] flex-col items-center text-[12px] leading-[17px]">
        <Fit w={27}>00:03</Fit>
        <Fit w={58}>31-12-2023</Fit>
      </div>
      <svg viewBox="0 0 28 28" className="ml-[15px] size-7">
        <path d="M2 4h16v13H9l-4 4v-4H2z" fill="#fff" />
        <path d="M5 8h10M5 11h10M5 14h6" stroke="#1f2228" />
        <circle cx="17" cy="19" r="7.500" fill="#3b3d42" stroke="#aaa" />
        <text x="17" y="23" fontSize="11" textAnchor="middle" fill="#fff">8</text>
      </svg>
    </div>
  </div>
);

export default function App() {
  return (
    <div className="flex h-[1080px] w-[1920px] flex-col overflow-hidden bg-white font-['Open_Sans','Noto_Sans',sans-serif]">
      <TabStrip />
      <div className="bg-[#1b371b]">
        <Toolbar />
      </div>
      <BookmarkBar />
      <AppHeader />
      <div className="flex h-[853px]">
        <Editor />
        <div className="flex w-[17px] flex-col items-center bg-[#f1f1f1]">
          <Arrow up dark />
          <div className="mt-auto h-[351px] w-[13px] bg-[#c1c1c1]" />
          <Arrow />
        </div>
        <Preview />
        <div className="flex w-[17px] flex-col items-center bg-[#f1f1f1]">
          <Arrow up />
          <div className="mb-auto h-[432px] w-[13px] bg-[#c1c1c1]" />
          <Arrow dark />
        </div>
      </div>
      <Taskbar />
    </div>
  );
}
